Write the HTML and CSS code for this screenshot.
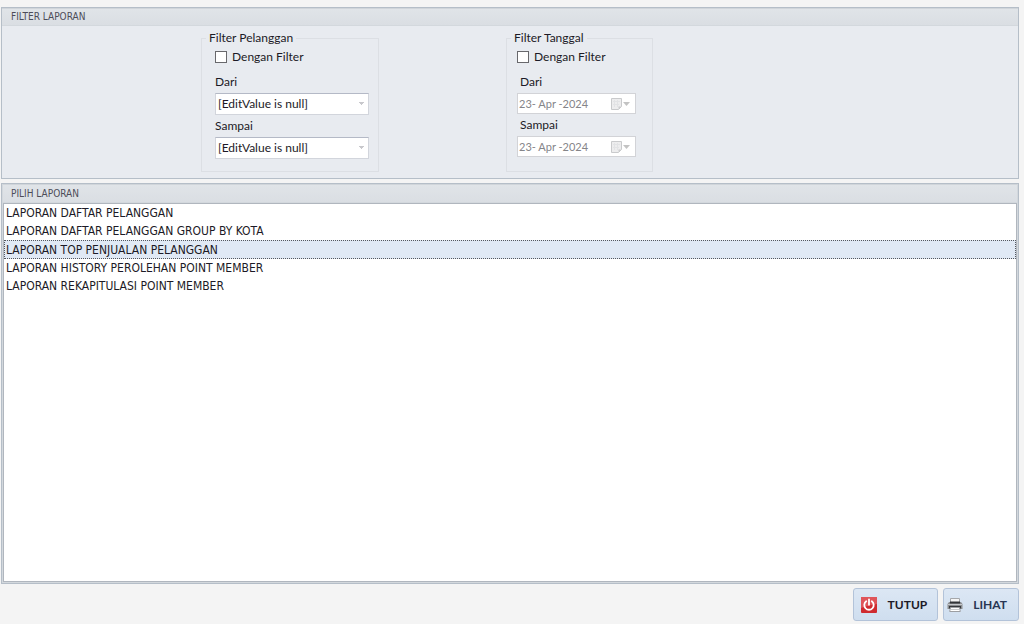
FILE: index.html
```html
<!DOCTYPE html>
<html lang="id">
<head>
<meta charset="utf-8">
<title>Laporan Pelanggan</title>
<link rel="stylesheet" href="styles.css">
</head>
<body>
<svg class="symbols" aria-hidden="true">
  <symbol id="calendar" viewBox="0 0 20 12">
    <path d="M.5 .5h10v8l-3 3h-7z" fill="#ededee" stroke="#c9cacc"/>
    <path d="M2 3.500h7M2 6.500h6M3.500 2v7M6.500 2v7" fill="none" stroke="#e2e3e5"/>
    <path d="M7.500 11V8.500H10z" fill="#c9cacc"/>
    <path d="M12 4h7l-3.500 4z" fill="#c3c3c3"/>
  </symbol>
</svg>
<main class="window">
  <section class="panel">
    <h2 class="panel-title">FILTER LAPORAN</h2>
    <div class="filters">
      <fieldset class="group group-customer">
        <legend>Filter Pelanggan</legend>
        <label class="check"><input type="checkbox"> Dengan Filter</label>
        <label class="caption" for="cust-from">Dari</label>
        <select class="combo" id="cust-from"><option>[EditValue is null]</option></select>
        <label class="caption" for="cust-to">Sampai</label>
        <select class="combo" id="cust-to"><option>[EditValue is null]</option></select>
      </fieldset>
      <fieldset class="group group-date">
        <legend>Filter Tanggal</legend>
        <label class="check"><input type="checkbox"> Dengan Filter</label>
        <label class="caption" for="date-from">Dari</label>
        <div class="date">
          <input id="date-from" type="text" value="23- Apr -2024" disabled>
          <button type="button" aria-label="Pilih tanggal awal" disabled><svg><use href="#calendar"/></svg></button>
        </div>
        <label class="caption" for="date-to">Sampai</label>
        <div class="date">
          <input id="date-to" type="text" value="23- Apr -2024" disabled>
          <button type="button" aria-label="Pilih tanggal akhir" disabled><svg><use href="#calendar"/></svg></button>
        </div>
      </fieldset>
    </div>
  </section>
  <section class="panel panel-reports">
    <h2 class="panel-title">PILIH LAPORAN</h2>
    <ul class="reports">
      <li><button type="button" class="report">LAPORAN DAFTAR PELANGGAN</button></li>
      <li><button type="button" class="report">LAPORAN DAFTAR PELANGGAN GROUP BY KOTA</button></li>
      <li><button type="button" class="report selected" aria-pressed="true">LAPORAN TOP PENJUALAN PELANGGAN</button></li>
      <li><button type="button" class="report">LAPORAN HISTORY PEROLEHAN POINT MEMBER</button></li>
      <li><button type="button" class="report">LAPORAN REKAPITULASI POINT MEMBER</button></li>
    </ul>
  </section>
  <div class="actions">
    <button type="button" class="action action-close">
      <svg viewBox="0 0 16 16" aria-hidden="true">
        <rect width="16" height="16" rx="1" fill="#cf2a2f"/>
        <path d="M0 0h16v7Q8 8 0 11z" fill="#df555a"/>
        <path d="M5.200 4.300a4.700 4.700 0 1 0 5.600 0M8 2.300v5.500" fill="none" stroke="#fff" stroke-width="1.800" stroke-linecap="round"/>
      </svg>
      TUTUP
    </button>
    <button type="button" class="action action-view">
      <svg viewBox="0 0 16 16" aria-hidden="true">
        <path d="M3.500 1.500h9V6h-9z" fill="#f5f5f5" stroke="#a5a7aa"/>
        <path d="M2 5h12l1.500 2v5H.5V7z" fill="#8b8d90"/>
        <path d="M3 4.500h10v2H3z" fill="#333538"/>
        <path d="M1 7.500h14" stroke="#c5c7ca"/>
        <path d="M2 9h12v2.500H2z" fill="#37393c"/>
        <path d="M3.500 10.500h9l.8 4H2.700z" fill="#fff" stroke="#9c9ea2"/>
        <path d="M4 12.500h8" stroke="#c8cacc"/>
      </svg>
      LIHAT
    </button>
  </div>
</main>
</body>
</html>
```

FILE: styles.css
```css
* { box-sizing: border-box; }

body {
  margin: 0;
  background: #f4f4f4;
  color: #1c1a26;
  font: 12px/16px Lato, sans-serif;
}

button, input, select { font: inherit; color: inherit; }

.symbols { display: none; }

.window {
  display: flex;
  flex-direction: column;
  min-height: 100vh;
  padding: 7px 5px 3px 1px;
}

.panel {
  border: 1px solid #b5bec8;
  background: #e8ebf0;
}

.panel-title {
  margin: 0;
  padding-left: 9px;
  border-top: 1px solid #d0d5da;
  border-bottom: 1px solid #d3d8dd;
  background: linear-gradient(#e0e4e8, #dadee3);
  color: #4c4c58;
  font: 10px/16px "DejaVu Sans Condensed", "DejaVu Sans", sans-serif;
}

.filters {
  display: flex;
  gap: 127px;
  padding: 4px 16px 6px 199px;
}

.group {
  display: flex;
  flex-direction: column;
  min-width: 0;
  margin: 0;
  border: 1px solid #dcdfe4;
}

.group legend { padding: 0 3px; }

.group-customer { width: 178px; padding: 3px 9px 12px 13px; }
.group-date { width: 147px; padding: 3px 16px 12px 10px; }
.group-date legend { margin-left: -6px; }
.group-customer legend { margin-left: -9px; }

.check {
  display: flex;
  align-items: center;
  gap: 5px;
  margin-bottom: 6px;
}

.check input {
  appearance: none;
  width: 12px;
  height: 12px;
  margin: 0;
  border: 1px solid #68686c;
  background: #fff;
}

.check input:checked { background: #4b6a8e; }

.caption { padding: 3px 0; }
.group-date .caption { padding-left: 3px; }

.combo, .date {
  width: 100%;
  height: 22px;
  border: 1px solid #d2d5dc;
  border-top-color: #b4b9c6;
  background: #fff;
}

.combo {
  appearance: none;
  padding: 0 16px 0 2px;
  border-radius: 0;
  background: linear-gradient(#c8c8cc, #c8c8cc) no-repeat right 6px top 10px / 1px 1px,
    linear-gradient(#c8c8cc, #c8c8cc) no-repeat right 5px top 9px / 3px 1px,
    linear-gradient(#c8c8cc, #c8c8cc) no-repeat right 4px top 8px / 5px 1px, #fff;
}

.date {
  display: flex;
  align-items: center;
  height: 21px;
  border-color: #d2d3d7;
  color: #858589;
  font-size: 11px;
}

.date input {
  flex: 1;
  min-width: 0;
  padding: 0 0 0 1px;
  border: 0;
  background: none;
}

.date button {
  display: flex;
  padding: 0 4px 0 0;
  border: 0;
  background: none;
}

.date svg { width: 20px; height: 12px; }

.panel-reports {
  display: flex;
  flex: 1;
  flex-direction: column;
  margin-top: 4px;
  padding: 0 1px 1px;
  background: #d3d8dd;
}

.panel-reports .panel-title { padding-left: 8px; line-height: 17px; }

.reports {
  flex: 1;
  margin: 0;
  padding: 0;
  border: 1px solid #b0b6be;
  background: #fff;
  list-style: none;
  font-family: "DejaVu Sans Condensed", "DejaVu Sans", sans-serif;
}

.report {
  display: block;
  width: 100%;
  height: 18px;
  padding: 0 1px;
  border: 1px dotted transparent;
  background: none;
  line-height: 16px;
  text-align: left;
}

.report.selected {
  height: 19px;
  border-color: #55585e;
  background: #e0e9f5;
}

.actions {
  display: flex;
  justify-content: flex-end;
  gap: 5px;
  padding-top: 4px;
}

.action {
  display: flex;
  align-items: center;
  height: 33px;
  padding: 0 10px 0 7px;
  border: 1px solid #b3c3d9;
  border-radius: 3px;
  background: linear-gradient(#dce7f4, #cfdeef);
  font-weight: 700;
}

.action svg { width: 16px; height: 16px; }
.action-close { gap: 11px; }
.action-view { gap: 10px; padding: 0 11px 0 3px; color: #283653; }
```
